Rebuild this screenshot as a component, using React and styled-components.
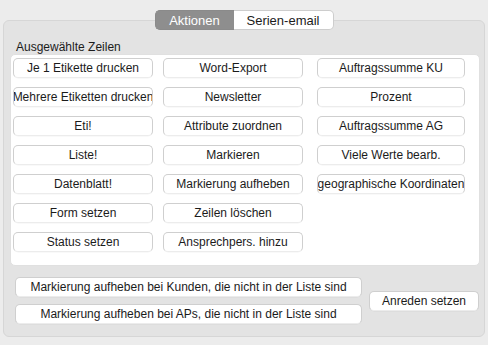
import React from 'react'
import styled, { createGlobalStyle } from 'styled-components'

const GlobalStyle = createGlobalStyle`
    body {
        margin: 0;
        background: #ececec;
        font-family: 'Liberation Sans', Arial, sans-serif;
        color: #1b1b1b;
    }
`

const Window = styled.div`
    width: 488px;
    height: 345px;
    padding: 10px 3px 0 3px;
    box-sizing: border-box;
`

const TabBar = styled.div`
    display: flex;
    justify-content: center;
    position: relative;
    z-index: 1;
    height: 20px;
`

const Tab = styled.div`
    height: 20px;
    box-sizing: border-box;
    width: ${(p) => p.width}px;
    display: flex;
    align-items: center;
    justify-content: center;
    font-size: 13px;
    background: ${(p) => (p.active ? '#8e8e8e' : '#ffffff')};
    color: ${(p) => (p.active ? '#ffffff' : '#1b1b1b')};
    border: 1px solid ${(p) => (p.active ? '#8a8a8a' : '#cdcdcd')};
    border-radius: ${(p) => (p.first ? '5px 0 0 5px' : '0 5px 5px 0')};
    ${(p) => (p.first ? 'border-right: none;' : 'border-left: none;')}
`

const Panel = styled.div`
    margin-top: -10px;
    height: 317px;
    box-sizing: border-box;
    background: #e3e3e3;
    border: 1px solid #d6d6d6;
    border-radius: 6px;
    padding: 18px 4px 0 6px;
`

const Label = styled.div`
    font-size: 12px;
    line-height: 14px;
    margin: 1px 0 0 6px;
    height: 14px;
`

const WhiteBox = styled.div`
    background: #ffffff;
    border: 1px solid #e0e0e0;
    border-radius: 5px;
    height: 212px;
    box-sizing: border-box;
    padding: 3px 0 0 2px;
    display: grid;
    grid-template-columns: 140px 140px 152px;
    grid-auto-rows: 20px;
    column-gap: 10px;
    row-gap: 9px;
    align-content: start;
`

const Button = styled.div`
    height: 20px;
    box-sizing: border-box;
    width: ${(p) => (p.width ? `${p.width}px` : 'auto')};
    justify-self: ${(p) => (p.width ? 'end' : 'stretch')};
    display: flex;
    align-items: center;
    justify-content: center;
    overflow: hidden;
    white-space: nowrap;
    font-size: 12px;
    background: #ffffff;
    border: 1px solid #cfcfcf;
    border-bottom-color: #ececec;
    border-radius: 5px;
    box-shadow: 0 0.5px 0.5px rgba(0, 0, 0, 0.05);
`

const Footer = styled.div`
    display: flex;
    align-items: center;
    gap: 7px;
    margin: 11px 0 0 5px;
`

const FooterStack = styled.div`
    display: flex;
    flex-direction: column;
    gap: 7px;
`

const columns = [
    [
        'Je 1 Etikette drucken',
        'Mehrere Etiketten drucken',
        'Eti!',
        'Liste!',
        'Datenblatt!',
        'Form setzen',
        'Status setzen',
    ],
    [
        'Word-Export',
        'Newsletter',
        'Attribute zuordnen',
        'Markieren',
        'Markierung aufheben',
        'Zeilen löschen',
        'Ansprechpers. hinzu',
    ],
    [
        'Auftragssumme KU',
        'Prozent',
        'Auftragssumme AG',
        'Viele Werte bearb.',
        'geographische Koordinaten',
    ],
]

const App = () => {
    return (
        <>
            <GlobalStyle />
            <Window>
                <TabBar>
                    <Tab active first width={79}>
                        Aktionen
                    </Tab>
                    <Tab width={100}>Serien-email</Tab>
                </TabBar>
                <Panel>
                    <Label>Ausgewählte Zeilen</Label>
                    <WhiteBox>
                        {columns.map((col, c) =>
                            col.map((text, r) => (
                                <Button
                                    key={text}
                                    width={c === 2 ? 148 : undefined}
                                    style={{ gridColumn: c + 1, gridRow: r + 1 }}
                                >
                                    {text}
                                </Button>
                            ))
                        )}
                    </WhiteBox>
                    <Footer>
                        <FooterStack>
                            <Button width={347}>
                                Markierung aufheben bei Kunden, die nicht in der Liste sind
                            </Button>
                            <Button width={347}>
                                Markierung aufheben bei APs, die nicht in der Liste sind
                            </Button>
                        </FooterStack>
                        <Button width={110}>Anreden setzen</Button>
                    </Footer>
                </Panel>
            </Window>
        </>
    )
}

export default App
